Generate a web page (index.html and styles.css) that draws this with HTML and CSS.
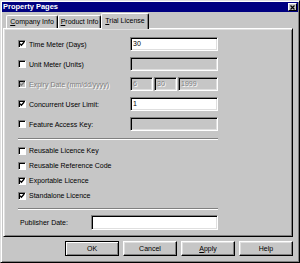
FILE: index.html
```html
<!DOCTYPE html>
<html>
<head>
<meta charset="utf-8">
<link rel="stylesheet" href="styles.css">
</head>
<body>
<div class="window">
  <div class="titlebar">
    <span class="title">Property Pages</span>
    <span class="close"><svg width="5" height="5" viewBox="0 0 5 5"><path d="M0.5 0.5 L4.5 4.5 M4.5 0.5 L0.5 4.5" stroke="#000" stroke-width="1.2" fill="none"/></svg></span>
  </div>
  <div class="content">
    <div class="tabs">
      <div class="tab tab-company"><u>C</u>ompany Info</div>
      <div class="tab tab-product"><u>P</u>roduct Info</div>
      <div class="tab tab-trial active"><u>T</u>rial License</div>
    </div>
    <div class="panel">
      <div class="rows">
        <div class="row">
          <label class="check"><span class="box"><svg width="6" height="6" viewBox="0 0 6 6"><path d="M0.8 2.6 L2.4 4.2 L5.2 1" stroke="#000" stroke-width="1.3" fill="none"/></svg></span>Time Meter (Days)</label>
          <div class="field">30</div>
        </div>
        <div class="row">
          <label class="check"><span class="box"></span>Unit Meter (Units)</label>
          <div class="field disabled"></div>
        </div>
        <div class="row">
          <label class="check disabled"><span class="box"><svg width="6" height="6" viewBox="0 0 6 6"><path d="M0.8 2.6 L2.4 4.2 L5.2 1" stroke="#808080" stroke-width="1.3" fill="none"/></svg></span>Expiry Date (mm/dd/yyyy)</label>
          <div class="date">
            <div class="field disabled dd">6</div>
            <div class="field disabled dd">30</div>
            <div class="field disabled yy">1999</div>
          </div>
        </div>
        <div class="row">
          <label class="check"><span class="box"><svg width="6" height="6" viewBox="0 0 6 6"><path d="M0.8 2.6 L2.4 4.2 L5.2 1" stroke="#000" stroke-width="1.3" fill="none"/></svg></span>Concurrent User Limit:</label>
          <div class="field">1</div>
        </div>
        <div class="row">
          <label class="check"><span class="box"></span>Feature Access Key:</label>
          <div class="field disabled"></div>
        </div>
      </div>
      <div class="sep sep-top"></div>
      <div class="checks">
        <label class="check"><span class="box"></span>Reusable Licence Key</label>
        <label class="check"><span class="box"></span>Reusable Reference Code</label>
        <label class="check"><span class="box"><svg width="6" height="6" viewBox="0 0 6 6"><path d="M0.8 2.6 L2.4 4.2 L5.2 1" stroke="#000" stroke-width="1.3" fill="none"/></svg></span>Exportable Licence</label>
        <label class="check"><span class="box"><svg width="6" height="6" viewBox="0 0 6 6"><path d="M0.8 2.6 L2.4 4.2 L5.2 1" stroke="#000" stroke-width="1.3" fill="none"/></svg></span>Standalone Licence</label>
      </div>
      <div class="sep sep-bottom"></div>
      <div class="pubrow">
        <span class="publabel">Publisher Date:</span>
        <div class="field pubfield"></div>
      </div>
    </div>
    <div class="buttons">
      <div class="btn default">OK</div>
      <div class="btn">Cancel</div>
      <div class="btn"><u>A</u>pply</div>
      <div class="btn">Help</div>
    </div>
  </div>
</div>
</body>
</html>
```

FILE: styles.css
```css
* { box-sizing: border-box; }
html, body { margin: 0; padding: 0; }
body {
  width: 300px;
  height: 263px;
  overflow: hidden;
  background: #c6c6c6;
  font-family: "Liberation Sans", Arial, sans-serif;
  font-size: 7px;
  color: #000;
}
u { text-decoration: underline; text-underline-offset: 1px; }

.window {
  width: 300px;
  height: 263px;
  background: #c6c6c6;
  border: 1px solid;
  border-color: #dfdfdf #000 #000 #dfdfdf;
  box-shadow: inset 1px 1px 0 #fff, inset -1px -1px 0 #808080;
  padding: 1px;
}

.titlebar {
  height: 10px;
  background: #000080;
  color: #fff;
  font-weight: bold;
  font-size: 7.5px;
  display: flex;
  align-items: center;
  justify-content: space-between;
  padding: 0 1px 0 1px;
  line-height: 10px;
}
.close {
  width: 9px;
  height: 8px;
  background: #c6c6c6;
  border: 1px solid;
  border-color: #fff #000 #000 #fff;
  display: flex;
  align-items: center;
  justify-content: center;
}
.close svg { display: block; }

.content {
  padding: 1px 5px 0 1px;
}

.tabs {
  display: flex;
  align-items: flex-end;
  height: 15px;
  padding-left: 3px;
  position: relative;
  z-index: 1;
}
.tab {
  height: 13px;
  line-height: 12px;
  text-align: center;
  background: #c6c6c6;
  border-top: 1px solid #fff;
  border-left: 1px solid #fff;
  border-right: 1px solid #000;
  box-shadow: inset -1px 0 0 #808080;
  border-radius: 2px 2px 0 0;
  white-space: nowrap;
}
.tab-company { width: 52px; }
.tab-product { width: 43px; }
.tab-trial { width: 48px; }
.tab.active {
  height: 16px;
  line-height: 14px;
  margin-bottom: -1px;
}

.panel {
  height: 209px;
  border: 1px solid;
  border-color: #fff #000 #000 #fff;
  box-shadow: inset 1px 1px 0 #dfdfdf, inset -1px -1px 0 #808080;
  padding: 8px 0 0 14px;
}

.rows {
  display: flex;
  flex-direction: column;
  gap: 6px;
}
.row {
  display: grid;
  grid-template-columns: 112px 88px;
  height: 14px;
  align-items: center;
}

.check {
  display: flex;
  align-items: center;
  gap: 3px;
  white-space: nowrap;
  height: 11px;
}
.box {
  width: 8px;
  height: 8px;
  background: #fff;
  border: 1px solid;
  border-color: #808080 #fff #fff #808080;
  box-shadow: inset 1px 1px 0 #000;
  display: flex;
  align-items: center;
  justify-content: center;
  flex: none;
}
.box svg { display: block; }
.check.disabled { color: #808080; text-shadow: 1px 1px 0 #fff; }
.check.disabled .box { background: #c6c6c6; }

.field {
  height: 14px;
  background: #fff;
  border: 1px solid;
  border-color: #808080 #fff #fff #808080;
  box-shadow: inset 1px 1px 0 #000, inset -1px -1px 0 #dfdfdf;
  padding: 0 2px;
  line-height: 12px;
  white-space: nowrap;
}
.field.disabled {
  background: #c6c6c6;
  color: #808080;
  text-shadow: 1px 1px 0 #fff;
}
.date {
  display: flex;
  gap: 1px;
}
.dd { width: 23px; }
.yy { width: 40px; }

.sep {
  width: 200px;
  height: 2px;
  border-top: 1px solid #808080;
  border-bottom: 1px solid #fff;
}
.sep-top { margin: 7px 0 5px; }
.sep-bottom { margin: 7px 0 5px; }

.checks {
  display: flex;
  flex-direction: column;
  gap: 4px;
}

.pubrow {
  display: grid;
  grid-template-columns: 71px 127px;
  align-items: center;
  padding-left: 2px;
  height: 15px;
}
.pubfield { height: 15px; }

.buttons {
  display: flex;
  justify-content: flex-end;
  gap: 4px;
  margin-top: 4px;
}
.btn {
  width: 54px;
  height: 15px;
  line-height: 13px;
  text-align: center;
  background: #c6c6c6;
  border: 1px solid;
  border-color: #fff #000 #000 #fff;
  box-shadow: inset -1px -1px 0 #808080, inset 1px 1px 0 #dfdfdf;
}
.btn.default {
  border-color: #000;
  box-shadow: inset 1px 1px 0 #fff, inset -1px -1px 0 #808080;
}
```
